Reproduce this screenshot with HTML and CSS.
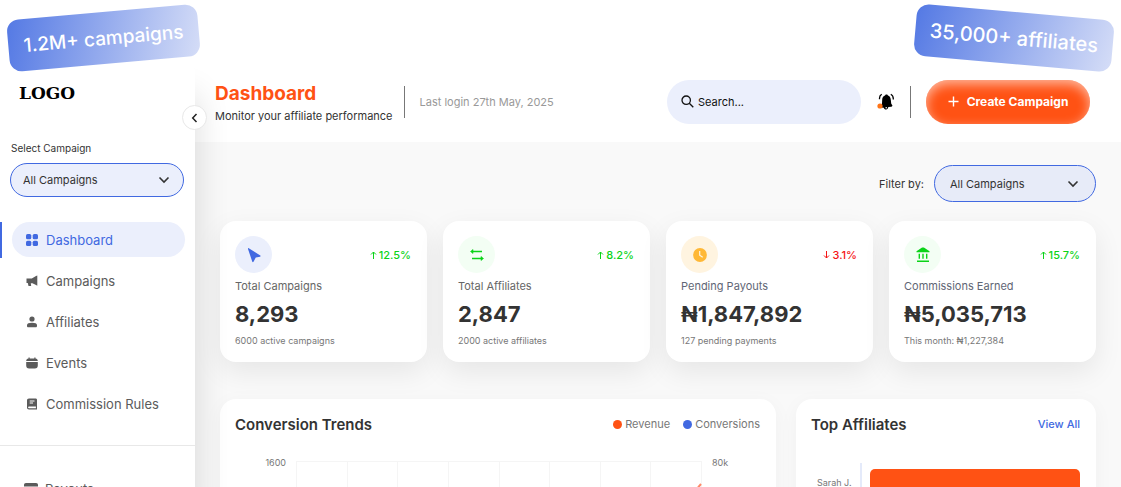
FILE: index.html
```html
<!DOCTYPE html>
<html lang="en">
<head>
<meta charset="utf-8">
<title>Affiliate Dashboard</title>
<link rel="stylesheet" href="styles.css">
</head>
<body>
<div class="promo promo-left">1.2M+ campaigns</div>
<div class="promo promo-right">35,000+ affiliates</div>
<div class="app">
  <aside class="sidebar">
    <div class="logo">LOGO</div>
    <button class="collapse" aria-label="Collapse sidebar">
      <svg width="12" height="12" viewBox="0 0 12 12"><path d="M7.5 2 3.700 6l3.800 4" fill="none" stroke="#222" stroke-width="1.500"/></svg>
    </button>
    <label class="side-label" for="campaign">Select Campaign</label>
    <div class="select side-select">
      <select id="campaign"><option>All Campaigns</option></select>
      <svg width="12" height="12" viewBox="0 0 12 12"><path d="M1.500 3.500 6 8l4.500-4.500" fill="none" stroke="#333" stroke-width="1.600"/></svg>
    </div>
    <nav class="nav">
      <a class="nav-item active" href="#dashboard">
        <svg width="12" height="12" viewBox="0 0 12 12" fill="currentColor"><rect width="5.300" height="5.300" rx="1.600"/><rect x="6.700" width="5.300" height="5.300" rx="1.600"/><rect y="6.700" width="5.300" height="5.300" rx="1.600"/><rect x="6.700" y="6.700" width="5.300" height="5.300" rx="1.600"/></svg>
        Dashboard</a>
      <a class="nav-item" href="#campaigns">
        <svg width="12" height="12" viewBox="0 0 12 12" fill="currentColor"><path d="M10 1 11.300.5v10.200L10 10 6.500 8.200H4.800l.4 2.700H2.500L1.800 8H.5V3.500h5.300z"/></svg>
        Campaigns</a>
      <a class="nav-item" href="#affiliates">
        <svg width="12" height="12" viewBox="0 0 12 12" fill="currentColor"><circle cx="6" cy="3" r="2.600"/><path d="M1 9.300C1 7.500 3 6.800 6 6.800s5 .7 5 2.500v.7c0 .8-.6 1.300-1.300 1.300H2.300C1.500 11.300 1 10.800 1 10z"/></svg>
        Affiliates</a>
      <a class="nav-item" href="#events">
        <svg width="12" height="12" viewBox="0 0 12 12" fill="currentColor"><path d="M2.500.5h1.200v1h4.600v-1h1.200v1C11 1.600 11.700 2.400 11.800 4H.2C.3 2.400 1 1.600 2.500 1.500zM.2 5h11.600v3.500c0 2-.9 3-3 3H3.200c-2.100 0-3-1-3-3z"/></svg>
        Events</a>
      <a class="nav-item" href="#rules">
        <svg width="12" height="12" viewBox="0 0 12 12"><path fill="currentColor" fill-rule="evenodd" d="M3 .5h6.500c1 0 1.500.5 1.500 1.500v9.500H3c-1.300 0-2-.7-2-2v-7C1 1.200 1.700.5 3 .5zM3 8.500c-1.200 0-1.200 1.800 0 1.800h6.900V8.500z"/><path d="M3.700 3h4.800M3.700 5h3.300" stroke="#fff"/></svg>
        Commission Rules</a>
    </nav>
    <nav class="nav nav-second">
      <a class="nav-item" href="#payouts">
        <svg width="14" height="12" viewBox="0 0 14 12" fill="currentColor"><path d="M2 0h10c1.300 0 2 .7 2 2v7c0 1.300-.7 2-2 2H2c-1.300 0-2-.7-2-2V2C0 .7.700 0 2 0z"/><path d="M0 4h14" stroke="#fff"/></svg>
        Payouts</a>
    </nav>
  </aside>

  <div class="main">
    <header class="header">
      <div class="heading">
        <h1>Dashboard</h1>
        <p>Monitor your affiliate performance</p>
      </div>
      <span class="rule"></span>
      <span class="last-login">Last login 27th May, 2025</span>
      <div class="search">
        <svg width="13" height="13" viewBox="0 0 13 13" fill="none" stroke="#111" stroke-width="1.300"><circle cx="5.200" cy="5.200" r="4.200"/><path d="m8.300 8.300 4 4"/></svg>
        <input type="text" placeholder="Search..." aria-label="Search">
      </div>
      <button class="bell" aria-label="Notifications">
        <svg width="18" height="18" viewBox="0 0 18 18"><path d="M9.500 1.500c.8 0 1.300.4 1.400 1 1.800.6 2.700 2 2.900 4.200l.4 3.800 1.300 2.300-1 1-3.200.3c-.2 1.500-1 2.500-2.200 2.500S7 15.800 6.800 14.800L4 14.500v-2l1-2 .2-4c.1-2 1.100-3.400 2.900-4 .1-.6.6-1 1.400-1z"/><circle cx="9.200" cy="14.800" r=".8" fill="#fff"/><path d="M4.700 1.200C3.300 2 2.500 3.400 2.500 5.200v1M13.800 1.200c1.600.9 2.500 2.400 2.500 4.500v.7" fill="none" stroke="#000" stroke-width="1.300"/><circle cx="3" cy="13" r="2.600" fill="#ff7417"/></svg>
      </button>
      <span class="rule"></span>
      <button class="create">
        <svg width="11" height="11" viewBox="0 0 11 11"><path d="M5.500.5v10M.5 5.500h10" stroke="#fff" stroke-width="1.400"/></svg>
        Create Campaign</button>
    </header>

    <main class="content">
      <div class="filter">
        <label for="filter">Filter by:</label>
        <div class="select">
          <select id="filter"><option>All Campaigns</option></select>
          <svg width="12" height="12" viewBox="0 0 12 12"><path d="M1.500 3.500 6 8l4.500-4.500" fill="none" stroke="#333" stroke-width="1.600"/></svg>
        </div>
      </div>

      <section class="stats">
        <article class="card stat">
          <div class="stat-top">
            <span class="badge blue"><svg width="16" height="16" viewBox="0 0 16 16"><path d="M2.800 1.200 14.300 8.500c.5.4.4 1-.2 1.200l-4.300.8-2.300 4.300c-.4.6-1 .5-1.200-.1L2 2c-.1-.7.300-1.100.8-.8z" fill="#4169e1"/></svg></span>
            <span class="delta up"><svg width="7" height="8" viewBox="0 0 7 8"><path d="M3.500 8V1M1 3.500 3.500 1 6 3.500"/></svg>12.5%</span>
          </div>
          <h2>Total Campaigns</h2><strong>8,293</strong><small>6000 active campaigns</small>
        </article>
        <article class="card stat">
          <div class="stat-top">
            <span class="badge green"><svg width="16" height="16" viewBox="0 0 16 16" fill="#0bd318" stroke="#0bd318"><path d="M3.500 4.500H13M3 11.500h10" stroke-width="1.400"/><path d="M1.500 4.500 4 2.500v4zM14.500 11.500l-2.500-2v4z" stroke-width=".6"/></svg></span>
            <span class="delta up"><svg width="7" height="8" viewBox="0 0 7 8"><path d="M3.500 8V1M1 3.500 3.500 1 6 3.500"/></svg>8.2%</span>
          </div>
          <h2>Total Affiliates</h2><strong>2,847</strong><small>2000 active affiliates</small>
        </article>
        <article class="card stat slate">
          <div class="stat-top">
            <span class="badge amber"><svg width="16" height="16" viewBox="0 0 16 16"><circle cx="8" cy="8" r="6.900" fill="#ffb836"/><path d="M7.700 4v4.300l3 2" fill="none" stroke="#fff4e0" stroke-width="1.200"/></svg></span>
            <span class="delta down"><svg width="7" height="8" viewBox="0 0 7 8"><path d="M3.500 0v7M1 4.500 3.500 7 6 4.500"/></svg>3.1%</span>
          </div>
          <h2>Pending Payouts</h2><strong>₦1,847,892</strong><small>127 pending payments</small>
        </article>
        <article class="card stat slate">
          <div class="stat-top">
            <span class="badge green"><svg width="16" height="16" viewBox="0 0 16 16" fill="#0bd318"><path d="M1.500 4.300 6.700.8c.9-.5 1.700-.5 2.600 0l5.200 3.500v.9h-13zM3.600 6.800H5v5H3.600zM7.300 6.800h1.400v5H7.300zM11 6.800h1.400v5H11zM2 13.600h12V15H2z"/></svg></span>
            <span class="delta up"><svg width="7" height="8" viewBox="0 0 7 8"><path d="M3.500 8V1M1 3.500 3.500 1 6 3.500"/></svg>15.7%</span>
          </div>
          <h2>Commissions Earned</h2><strong>₦5,035,713</strong><small>This month: ₦1,227,384</small>
        </article>
      </section>

      <section class="panels">
        <article class="card panel">
          <div class="panel-head">
            <h3>Conversion Trends</h3>
            <div class="legend"><span class="key revenue">Revenue</span><span class="key conversions">Conversions</span></div>
          </div>
          <div class="trend">
            <span class="tick tick-left">1600</span>
            <div class="plot">
              <i></i><i></i><i></i><i></i><i></i><i></i><i></i><i></i>
              <svg width="30" height="60" viewBox="0 0 30 60"><path d="M0 50C12 44 17 32 24 28l5-6" fill="none" stroke="#ff8a68" stroke-width="2"/></svg>
            </div>
            <span class="tick tick-right">80k</span>
          </div>
        </article>
        <article class="card panel">
          <div class="panel-head"><h3>Top Affiliates</h3><a href="#all">View All</a></div>
          <div class="ranking">
            <span class="tick">Sarah J.</span>
            <div class="axis"><div class="bar"></div></div>
          </div>
        </article>
      </section>
    </main>
  </div>
</div>
</body>
</html>
```
FILE: styles.css
```css
* { box-sizing: border-box; }

body {
  display: flex;
  flex-direction: column;
  height: 100vh;
  margin: 0;
  padding-top: 61px;
  overflow: hidden;
  background: #fff;
  color: #333;
  font-family: Inter, "Liberation Sans", sans-serif;
  font-size: 11px;
}

h1, h2, h3, p { margin: 0; }
button, input, select { border: 0; color: inherit; font: inherit; }
button { display: flex; align-items: center; justify-content: center; padding: 0; cursor: pointer; }
a { color: inherit; text-decoration: none; }
svg { flex: none; display: block; }

/* Tilted promotional labels floating over the page */
.promo {
  position: absolute;
  z-index: 3;
  display: flex;
  align-items: center;
  justify-content: center;
  height: 52px;
  border-radius: 12px;
  background: linear-gradient(105deg, #5479e4, #d5ddf7);
  color: #fff;
  font-size: 20px;
  font-weight: 500;
  white-space: nowrap;
}
.promo-left { top: 12px; left: 8px; width: 191px; font-size: 19px; transform: rotate(-5deg); }
.promo-right { top: 12px; right: 8px; width: 198px; transform: rotate(5deg); }

.app { display: flex; flex: 1; min-height: 0; }

/* Sidebar */
.sidebar {
  position: relative;
  z-index: 2;
  flex: none;
  width: 195px;
  padding-top: 20px;
  border-top-right-radius: 10px;
  background: #fff;
  box-shadow: 4px 32px 32px rgba(0, 0, 0, .12);
}
.logo {
  margin-left: 19px;
  font: bold 17px/24px "DejaVu Serif", serif;
  color: #000;
}
.collapse {
  position: absolute;
  top: 44px;
  right: -12px;
  width: 25px;
  height: 25px;
  border: 1px solid #e8e8e8;
  border-radius: 50%;
  background: #fff;
}
.side-label { display: block; margin: 35px 0 7px 11px; font-size: 10px; line-height: 16px; }

.select { display: grid; align-items: center; width: 162px; }
.select select {
  grid-area: 1 / 1;
  width: 100%;
  height: 37px;
  padding: 0 15px;
  border: 1px solid #4169e1;
  border-radius: 19px;
  background: #e7ebf8;
  appearance: none;
}
.select svg { grid-area: 1 / 1; justify-self: end; margin-right: 17px; pointer-events: none; }
.side-select { width: 174px; margin-left: 10px; }
.side-select select { height: 34px; padding: 0 12px; background: #ebeffc; }
.side-select svg { margin-right: 14px; }

.nav { display: flex; flex-direction: column; gap: 6px; padding: 25px 10px 24px 12px; }
.nav-item {
  position: relative;
  display: flex;
  align-items: center;
  gap: 8px;
  height: 35px;
  padding-left: 14px;
  border-radius: 18px;
  color: #5b5b5b;
  font-size: 13px;
}
.nav-item.active { background: #ebeffc; color: #4169e1; }
.nav-item.active::before {
  content: "";
  position: absolute;
  left: -12px;
  width: 2px;
  height: 36px;
  background: #4169e1;
}
.nav-second { border-top: 1px solid #e8e8e8; }
.nav-second .nav-item { gap: 7px; padding-left: 12px; }

/* Header */
.main { display: flex; flex: 1; flex-direction: column; min-width: 0; }
.header {
  display: flex;
  flex: none;
  align-items: center;
  height: 81px;
  padding: 0 31px 0 20px;
}
.heading { padding-top: 4px; }
.heading h1 { color: #ff5214; font-size: 19px; line-height: 24px; }
.heading p { line-height: 20px; }
.rule { width: 1px; height: 32px; margin: 0 15px; background: #777; }
.heading + .rule { margin-left: 11px; }
.last-login { color: #999; }
.search {
  display: flex;
  align-items: center;
  gap: 4px;
  width: 194px;
  height: 44px;
  margin-left: auto;
  padding: 0 14px;
  border-radius: 22px;
  background: #ebeffc;
}
.search input { width: 100%; min-width: 0; padding: 0; background: none; outline: 0; }
.search input::placeholder { color: #111; opacity: 1; }
.bell { margin-left: 16px; background: none; }
.create {
  gap: 8px;
  width: 164px;
  height: 44px;
  border-radius: 22px;
  background: #ff5214;
  box-shadow: inset 0 4px 12px rgba(255, 255, 255, .6);
  color: #fff;
  font-size: 12px;
  font-weight: 700;
}

/* Content */
.content { flex: 1; min-height: 0; padding: 23px 25px 0; background: #f9f9f9; }
.filter { display: flex; align-items: center; justify-content: flex-end; gap: 10px; }
.card { border-radius: 16px; background: #fff; box-shadow: 0 10px 28px rgba(0, 0, 0, .08); }

.stats { display: grid; grid-template-columns: repeat(4, 1fr); gap: 16px; margin-top: 19px; }
.stat { display: flex; flex-direction: column; height: 141px; padding: 15px 16px 0 15px; }
.stat-top { display: flex; align-items: center; justify-content: space-between; }
.badge { display: flex; align-items: center; justify-content: center; width: 37px; height: 37px; border-radius: 50%; }
.badge.blue { background: #ebeffc; }
.badge.green { background: #f3fef4; }
.badge.amber { background: #fff4e0; }
.delta { display: flex; align-items: center; gap: 2px; font-weight: 500; }
.delta svg { fill: none; stroke: currentColor; }
.up { color: #0bd318; }
.down { color: #f51414; }
.stat h2 { margin-top: 4px; color: #666; font-size: 11px; font-weight: 400; line-height: 18px; }
.slate h2 { color: #5f6675; }
.stat strong { font-size: 22px; font-weight: 700; line-height: 38px; }
.stat small { color: #777; font-size: 9px; line-height: 16px; }

.panels { display: grid; grid-template-columns: minmax(0, 556fr) minmax(0, 300fr); gap: 20px; margin-top: 37px; }
.panel { min-height: 260px; padding: 13px 16px 13px 15px; box-shadow: 0 4px 20px rgba(0, 0, 0, .04); }
.panel-head { display: flex; align-items: center; justify-content: space-between; height: 24px; }
.panel-head h3 { font-size: 15px; font-weight: 600; }
.panel-head a { color: #4169e1; font-weight: 500; }
.legend { display: flex; gap: 13px; color: #777; }
.key { display: flex; align-items: center; gap: 3px; }
.key::before { content: ""; width: 9px; height: 9px; border-radius: 50%; background: #ff5214; }
.key.conversions::before { background: #4169e1; }

.tick { color: #777; font-size: 9px; line-height: 12px; }
.trend { display: flex; gap: 10px; margin-top: 21px; }
.tick-left { width: 51px; text-align: right; }
.tick-right { width: 48px; }
.plot {
  position: relative;
  display: grid;
  flex: 1;
  grid-template-columns: repeat(8, 1fr);
  height: 180px;
  margin-top: 4px;
  border: solid #f5f5f5;
  border-width: 1px 0 0 1px;
}
.plot i { border-right: 1px solid #f5f5f5; }
.plot svg { position: absolute; top: 0; right: 0; }

.ranking { display: flex; gap: 8px; margin-top: 27px; padding-left: 6px; }
.ranking .tick { margin-top: 14px; }
.axis { flex: 1; height: 180px; padding: 6px 0 0 8px; border-left: 2px solid #e4eafa; }
.bar { height: 28px; border-radius: 5px; background: #ff5214; }
```
